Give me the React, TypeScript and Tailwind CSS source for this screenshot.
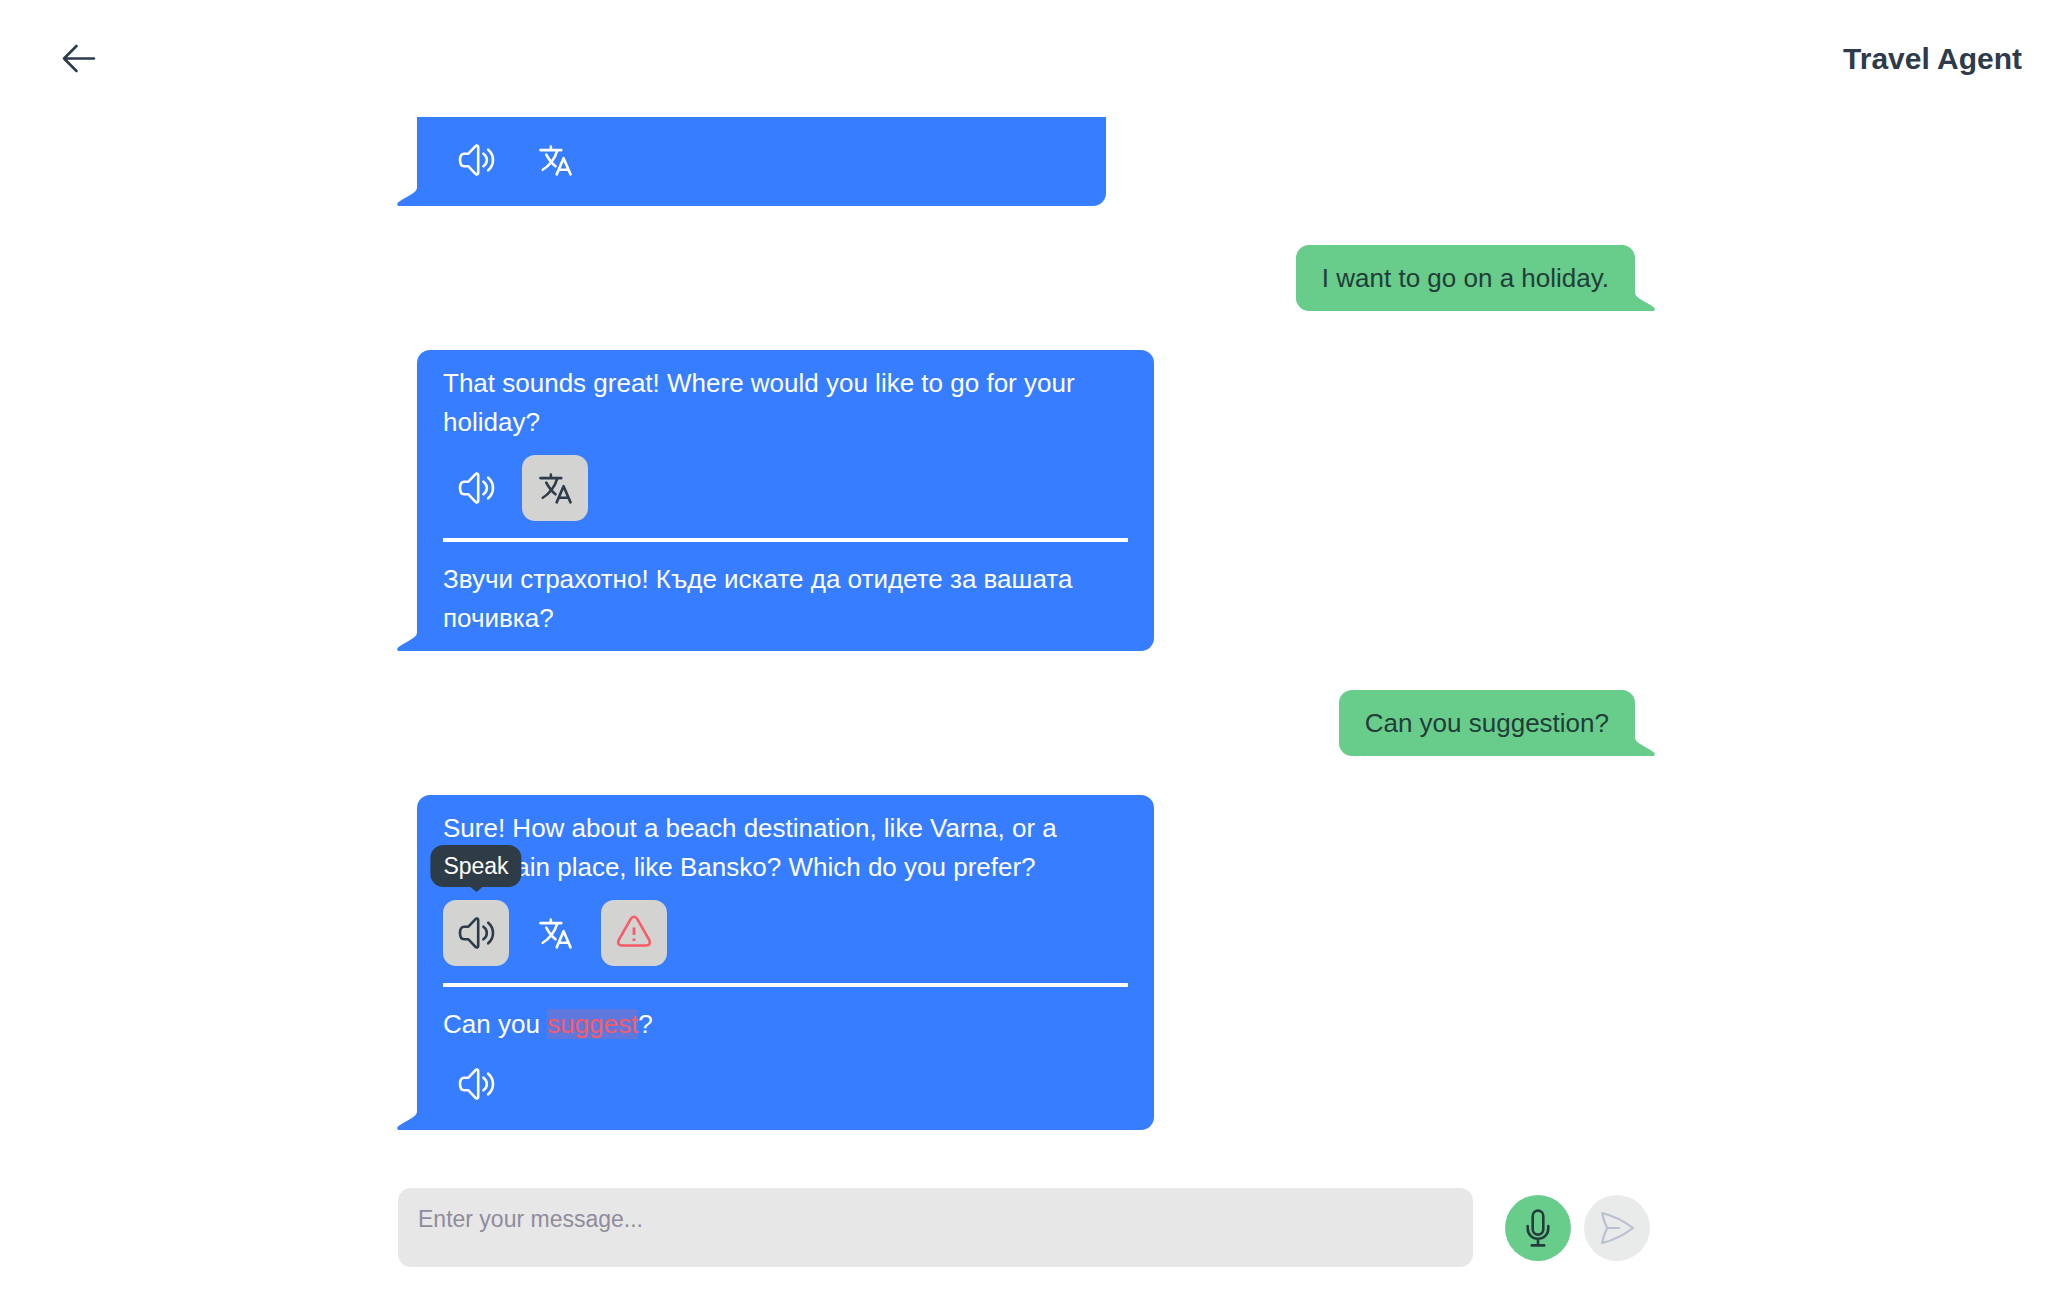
import type { ReactNode } from "react";
import { IoLanguageOutline } from "react-icons/io5";

function BackIcon() {
  return (
    <svg viewBox="0 0 66 66" className="size-[66px]" fill="none" stroke="currentColor" strokeWidth="2.6" strokeLinecap="round" strokeLinejoin="round" aria-hidden="true">
      <path d="M48 32.500H18M30.500 20 18 32.500l12.500 12.500" />
    </svg>
  );
}

function SpeakerIcon() {
  return (
    <svg viewBox="0 0 66 66" className="size-[66px]" fill="none" stroke="currentColor" strokeWidth="2.6" strokeLinecap="round" strokeLinejoin="round" aria-hidden="true">
      <path d="M25.4 26.7H21.2C17.9 26.7 17 29.8 17 33s.9 6.3 4.2 6.3h4.2l6.9 7.4c1.2 1.3 2.9.9 2.9-.8V20.1c0-1.7-1.7-2.1-2.9-.8Z" />
      <path d="M40.4 26.7c4.6 3.2 4.6 9.4 0 12.6M45.2 22.7c6.4 5.4 6.4 15.2 0 20.6" />
    </svg>
  );
}

function WarningIcon() {
  return (
    <svg viewBox="0 0 66 66" className="size-[66px]" fill="none" stroke="currentColor" strokeWidth="2.6" strokeLinejoin="round" aria-hidden="true">
      <path d="M29.8 18.9c1.800-2.800 4.600-2.800 6.400 0l12 20.900c1.600 3.200.3 5.700-3 5.700H20.800c-3.300 0-4.600-2.500-3-5.700Z" />
      <path d="M33 27.6V35M33 38.4v2.6" strokeWidth="2.8" />
    </svg>
  );
}

function MicIcon() {
  return (
    <svg viewBox="0 0 66 66" className="size-[66px]" fill="none" stroke="currentColor" strokeWidth="2.6" strokeLinecap="round" aria-hidden="true">
      <rect x="27.7" y="15.6" width="10.6" height="24" rx="5.3" />
      <path d="M22.7 31v2.2c0 6.4 4.6 10.6 10.3 10.6s10.3-4.2 10.3-10.6V31M33 43.8v6.6M26.8 50.4h12.4" />
    </svg>
  );
}

function SendIcon() {
  return (
    <svg viewBox="0 0 66 66" className="size-[66px]" fill="none" stroke="currentColor" strokeWidth="2.2" strokeLinejoin="round" aria-hidden="true">
      <path d="M18.2 18C30.5 21 40.5 26.500 49 33 40.500 39.500 30.500 45 18.200 48Q19.500 40 23.200 33 19.500 26 18.200 18ZM23.200 33H36" />
    </svg>
  );
}

function TranslateIcon() {
  return <IoLanguageOutline className="size-[37px] [&_path]:stroke-[36px]" aria-hidden="true" />;
}

function Tail({ side }: { side: "left" | "right" }) {
  return (
    <svg
      viewBox="0 0 20 18"
      className={
        side === "left"
          ? "absolute bottom-0 right-full h-[18px] w-5 -scale-x-100 text-[#377dff]"
          : "absolute bottom-0 left-full h-[18px] w-5 text-[#68cc8b]"
      }
      fill="currentColor"
      aria-hidden="true"
    >
      <path d="M0 0C.5 3 4 5.500 8 7.700 12 10 17 12.500 19 14.500 20.500 16 19.500 18 18 18H0Z" />
    </svg>
  );
}

function ToolButton({ label, active, danger, tooltip, children }: { label: string; active?: boolean; danger?: boolean; tooltip?: boolean; children: ReactNode }) {
  return (
    <button
      type="button"
      aria-label={label}
      className={`relative flex size-[66px] items-center justify-center rounded-[13px] ${active ? "bg-[#d3d3d1]" : ""} ${danger ? "text-[#f85a68]" : active ? "text-[#2d3b4a]" : "text-white"}`}
    >
      {children}
      {tooltip && (
        <span className="absolute bottom-full left-1/2 mb-[13px] -translate-x-1/2 rounded-[13px] bg-[#2e3c48] px-[13px] py-[5px] text-[23px] leading-8 text-white">
          {label}
          <span className="absolute left-1/2 top-full -translate-x-1/2 border-x-[6px] border-t-[5px] border-x-transparent border-t-[#2e3c48]" />
        </span>
      )}
    </button>
  );
}

function AgentBubble({ className, children }: { className?: string; children: ReactNode }) {
  return (
    <div className={`relative max-w-[737px] shrink-0 self-start rounded-[13px] rounded-bl-none bg-[#377dff] px-[26px] pb-[13px] text-white ${className ?? "pt-[14px]"}`}>
      {children}
      <Tail side="left" />
    </div>
  );
}

function UserBubble({ children }: { children: ReactNode }) {
  return (
    <div className="relative max-w-[737px] shrink-0 self-end rounded-[13px] rounded-br-none bg-[#68cc8b] px-[26px] pt-[14px] pb-[13px] text-[#223d38]">
      {children}
      <Tail side="right" />
    </div>
  );
}

function Divider() {
  return <hr className="mt-[17px] mb-[18px] border-t-4 border-white" />;
}

export default function App() {
  return (
    <div className="flex h-screen flex-col bg-white font-['Liberation_Sans',Arial,sans-serif] text-[26px] leading-[39px] text-[#2d3b4a]">
      <header className="flex h-[117px] shrink-0 items-center justify-between pl-[46px] pr-[26px]">
        <button type="button" aria-label="Back">
          <BackIcon />
        </button>
        <h1 className="text-[30px] font-bold">Travel Agent</h1>
      </header>

      <main className="flex min-h-0 flex-1 flex-col overflow-hidden">
        <div className="mx-auto flex w-full max-w-[1262px] flex-col gap-[39px] pl-6 pr-5">
          <AgentBubble className="w-[689px] rounded-t-none pt-[10px]">
            <div className="flex gap-[13px]">
              <ToolButton label="Speak"><SpeakerIcon /></ToolButton>
              <ToolButton label="Translate"><TranslateIcon /></ToolButton>
            </div>
          </AgentBubble>

          <UserBubble>
            <p>I want to go on a holiday.</p>
          </UserBubble>

          <AgentBubble>
            <p>That sounds great! Where would you like to go for your holiday?</p>
            <div className="mt-[13px] flex gap-[13px]">
              <ToolButton label="Speak"><SpeakerIcon /></ToolButton>
              <ToolButton label="Translate" active><TranslateIcon /></ToolButton>
            </div>
            <Divider />
            <p lang="bg">Звучи страхотно! Къде искате да отидете за вашата почивка?</p>
          </AgentBubble>

          <UserBubble>
            <p>Can you suggestion?</p>
          </UserBubble>

          <AgentBubble>
            <p>Sure! How about a beach destination, like Varna, or a mountain place, like Bansko? Which do you prefer?</p>
            <div className="mt-[13px] flex gap-[13px]">
              <ToolButton label="Speak" active tooltip><SpeakerIcon /></ToolButton>
              <ToolButton label="Translate"><TranslateIcon /></ToolButton>
              <ToolButton label="Corrections" active danger><WarningIcon /></ToolButton>
            </div>
            <Divider />
            <p>
              Can you <mark className="bg-[#5f78dd] text-[#f85a68]">suggest</mark>?
            </p>
            <div className="mt-[7px] flex">
              <ToolButton label="Speak correction"><SpeakerIcon /></ToolButton>
            </div>
          </AgentBubble>
        </div>
      </main>

      <footer className="mx-auto flex w-full max-w-[1252px] shrink-0 items-center pb-[26px]">
        <textarea
          aria-label="Message"
          placeholder="Enter your message..."
          className="h-[79px] min-w-0 flex-1 resize-none rounded-[13px] bg-[#e7e7e7] px-5 py-[13px] text-[23px] leading-9 placeholder:text-[#8f8c9b]"
        />
        <button type="button" aria-label="Record" className="ml-8 rounded-full bg-[#68cc8b] text-[#243c3b]">
          <MicIcon />
        </button>
        <button type="button" aria-label="Send" disabled className="ml-[13px] rounded-full bg-[#e9ebea] text-[#b9c0cf]">
          <SendIcon />
        </button>
      </footer>
    </div>
  );
}
